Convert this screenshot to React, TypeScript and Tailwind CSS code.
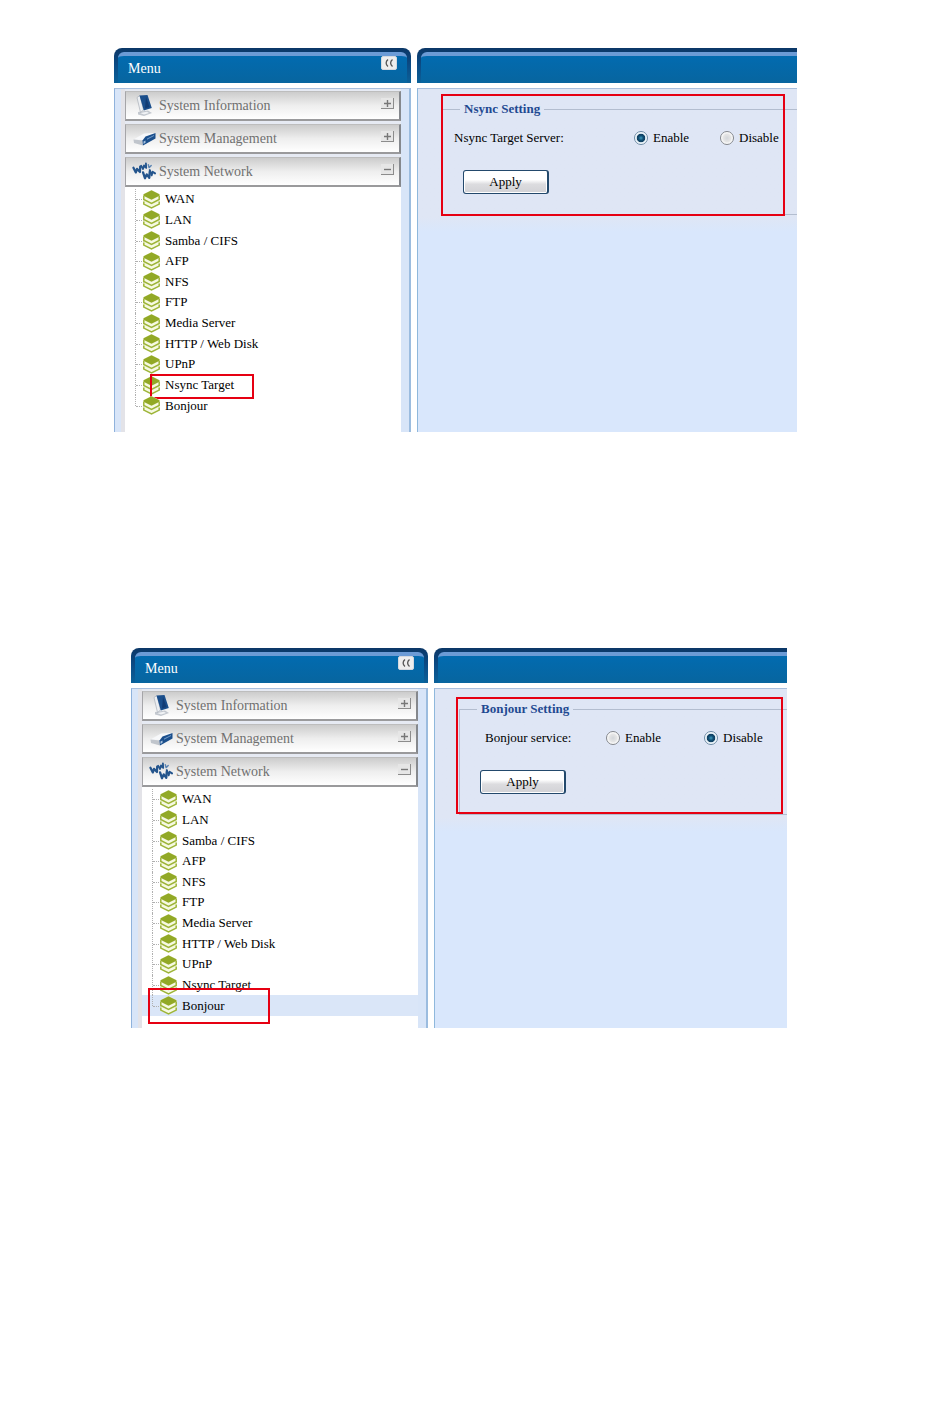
import React from "react";

const services = [
  "WAN",
  "LAN",
  "Samba / CIFS",
  "AFP",
  "NFS",
  "FTP",
  "Media Server",
  "HTTP / Web Disk",
  "UPnP",
  "Nsync Target",
  "Bonjour",
];

function StackIcon() {
  return (
    <svg className="relative h-[19px] w-[17px] shrink-0" viewBox="0 0 17 19" aria-hidden="true">
      <path d="M8.500 0 16.500 4v10.300L8.500 18.500.5 14.300V4Z" fill="#f6f9e2" />
      <path d="M8.500.2 16.500 4.200v1.600L8.500 9.800.5 5.800V4.200Z" fill="#92a926" />
      <path
        d="M.8 5.800v3.700L8.500 13.300 16.200 9.500V5.800M.8 11.500v2.600L8.500 18 16.200 14.100v-2.600"
        fill="none"
        stroke="#9db437"
        strokeWidth="1.500"
      />
    </svg>
  );
}

function MonitorIcon() {
  return (
    <svg className="h-[26px] w-[24px]" viewBox="0 0 24 26" aria-hidden="true">
      <path d="M6 20 16 18.500l4 2.500-8 3-6-1.500Z" fill="#c3c8cf" />
      <path d="M8 21 15 19.800l2 1.200-5 1.600Z" fill="#f0f2f5" />
      <path d="M5 5.500 8 3.500 11.500 18 8.500 20.500Z" fill="#eceff3" stroke="#a9afb8" strokeWidth=".7" />
      <path d="M7.500 3.500 15.500 3 19.800 16 11.800 18.500Z" fill="#1b4f8c" />
      <path d="M14 5 17.500 15 13 16.500Z" fill="#123c74" />
    </svg>
  );
}

function DriveIcon() {
  return (
    <svg className="h-[26px] w-[24px]" viewBox="0 0 24 26" aria-hidden="true">
      <path d="M1.500 14.500 12 8.500 23.500 8 13 15Z" fill="#f7f8fa" />
      <path d="M1.500 14.500 11 15.500v5L2 18Z" fill="#c0c5cc" />
      <path d="M10.500 15.500 13.500 11.500 23.500 8v5.500L11 20.500Z" fill="#1b4f8c" />
      <path d="M15 13.500 22 10v1L15 14.800Z" fill="#6d97c6" />
      <path d="M11.500 16.500 13.500 15.400v2.400L11.500 19Z" fill="#a9c3e0" />
    </svg>
  );
}

function WebIcon() {
  return (
    <svg
      className="h-[26px] w-[25px]"
      viewBox="0 0 25 26"
      fill="none"
      stroke="#24558d"
      strokeLinejoin="round"
      strokeLinecap="round"
      aria-hidden="true"
    >
      <path d="M1.500 9.500 4 14.500 5.200 10.800 8.300 14 8.500 8.300" strokeWidth="2.300" />
      <path d="M9.500 7.500 11.500 11 12.500 7.200 14.800 9.800 14.500 5" strokeWidth="1.900" />
      <path d="M11.500 14.500 13.500 20.500 15.300 16.500 18 20 18.500 13.500" strokeWidth="2.400" />
      <path d="M18.500 12 20.500 17.500 21.500 13.800 24 15.500" strokeWidth="2" />
      <path d="M17 6.500 17.800 9.500 20 7.200" stroke="#5c85b3" strokeWidth="1.500" />
    </svg>
  );
}

const groups = [
  { title: "System Information", icon: <MonitorIcon />, open: false },
  { title: "System Management", icon: <DriveIcon />, open: false },
  { title: "System Network", icon: <WebIcon />, open: true },
];

function TitleBar({ children, open }: { children?: React.ReactNode; open?: boolean }) {
  return (
    <div
      className={
        "flex h-[35px] bg-linear-to-b from-[#0b3767] via-[#0b4c86] to-[#0b6199] pt-1 pl-1 " +
        (open ? "rounded-tl-lg" : "rounded-t-lg pr-1")
      }
    >
      <div
        className={
          "flex flex-1 justify-between border-t-4 border-[#6b9bd6] bg-linear-to-b from-[#026bb0] to-[#07659f] " +
          (open ? "rounded-tl-md" : "rounded-t-md")
        }
      >
        {children}
      </div>
    </div>
  );
}

function Menu({ callout, selected }: { callout: React.ReactNode; selected?: boolean }) {
  return (
    <nav aria-label="Menu" className="flex w-[297px] shrink-0 flex-col gap-[5px]">
      <TitleBar>
        <h2 className="pt-1 pl-[10px] text-[14px] leading-[17px] text-white">Menu</h2>
        <button
          type="button"
          aria-label="Collapse menu"
          className="mr-[10px] flex h-[14px] w-[16px] items-center justify-center rounded-xs border border-[#d5d9df] bg-[#eeeeee]"
        >
          <svg className="h-[10px] w-[12px] shrink-0" viewBox="0 0 12 10" fill="none" stroke="#555" strokeWidth="1.300" aria-hidden="true">
            <path d="M5 1.500C2.500 3.500 2.500 6.500 5 8.500M9.500 1.500C7 3.500 7 6.500 9.500 8.500" />
          </svg>
        </button>
      </TitleBar>
      <div className="flex flex-1 border-t border-r-2 border-l border-t-[#a9bfdd] border-r-[#9bbcdf] border-l-[#8fb2dc] bg-[#d8e5f8] pr-2 pl-[6px]">
        <div className="flex-1 border-l-4 border-[#e3e3e8] bg-white">
          <div className="flex flex-col gap-[3px] bg-[#e6eaf3] pt-[2px]">
            {groups.map((g) => (
              <button
                type="button"
                key={g.title}
                aria-expanded={g.open}
                className="flex h-[30px] items-start border-t border-r-2 border-b-2 border-l border-t-[#bdbdbd] border-r-[#85888d] border-b-[#9a9a9c] border-l-[#a5a5a8] bg-linear-to-b from-[#cccccc] via-[#eeeeee] to-white pl-[6px] text-left"
              >
                <span className="flex w-[24px]">{g.icon}</span>
                <span className="flex-1 pt-[5px] pl-[3px] text-[14px] leading-[18px] text-[#707070]">{g.title}</span>
                <span className="mt-[6px] mr-[5px] flex h-[11px] w-[13px] items-center justify-center border-r border-b border-[#8c8c8c] bg-[#e6e6e6]">
                  <svg className="h-[9px] w-[9px]" viewBox="0 0 9 9" stroke="#777" strokeWidth="1.400" aria-hidden="true">
                    <path d={g.open ? "M1 4.500h7" : "M1 4.500h7M4.500 1v7"} />
                  </svg>
                </span>
              </button>
            ))}
          </div>
          <ul className="grid h-[229px] auto-rows-fr pt-[2px]">
            {services.map((name, i) => {
              const last = i === services.length - 1;
              const marked = selected ? last : name === "Nsync Target";
              return (
                <li key={name} className={"relative flex items-center pl-[10px] " + (selected && last ? "bg-[#dae6f8]" : "")}>
                  <span
                    className={
                      "w-[8px] border-l border-dotted border-[#b0b0b0] " + (last ? "h-1/2 self-start" : "self-stretch")
                    }
                  />
                  <span className="absolute top-1/2 left-[11px] w-2 border-t border-dotted border-[#b0b0b0]" />
                  <StackIcon />
                  <a href="#" className="pl-[5px] text-[13px] leading-4 text-black">
                    {name}
                  </a>
                  {marked && callout}
                </li>
              );
            })}
          </ul>
        </div>
      </div>
    </nav>
  );
}

function Choice({ name, label, checked }: { name: string; label: string; checked?: boolean }) {
  return (
    <label className="flex items-center gap-[5px] text-[13px] leading-4 whitespace-nowrap">
      <input
        type="radio"
        name={name}
        defaultChecked={checked}
        className="h-[14px] w-[14px] shrink-0 appearance-none rounded-full border border-[#84878c] bg-[radial-gradient(circle_at_50%_50%,#d3d6da_0,#e6e6e6_45%,#ffffff_70%)] checked:border-[#6c8ba5] checked:bg-[radial-gradient(circle_at_50%_50%,#3f9cbd_0,#0f4d73_28%,#133f60_46%,#dcebf4_54%,#ffffff_70%)]"
      />
      {label}
    </label>
  );
}

function Apply() {
  return (
    <button
      type="button"
      className="h-[24px] w-[86px] rounded-[3px] border border-r-2 border-[#23496c] bg-linear-to-b from-white from-40% via-[#dcdcdf] via-60% to-[#d2d2d6] text-[13px] leading-4 shadow-[inset_0_0_0_1px_#ffffff]"
    >
      Apply
    </button>
  );
}

function Panel({ title, callout, children }: { title: string; callout: React.ReactNode; children: React.ReactNode }) {
  return (
    <div className="flex min-w-0 flex-1 flex-col gap-[5px]">
      <TitleBar open />
      <div className="relative flex-1 border-t border-l border-t-[#a9bfdd] border-l-[#8fb8dc] bg-[#d9e7fc]">
        <div className="bg-linear-to-b from-[#dfe6f5] from-90% to-[#d9e7fc] pt-3 pb-4 pl-6">
          <fieldset className="h-[114px] border border-r-0 border-[#b3bdcf]">
            <legend className="ml-[17px] px-1 text-[13px] leading-4 font-bold text-[#1f4a92]">{title}</legend>
            {children}
          </fieldset>
        </div>
        {callout}
      </div>
    </div>
  );
}

export default function App() {
  return (
    <main className="min-h-screen bg-white pt-12 font-['Liberation_Serif',serif] text-black">
      <section className="mr-[153px] mb-[216px] ml-[114px] flex min-h-[384px] gap-[6px]">
        <Menu
          callout={<span className="pointer-events-none absolute -top-px left-[25px] h-[25px] w-[104px] border-2 border-[#e60012]" />}
        />
        <Panel
          title="Nsync Setting"
          callout={<span className="pointer-events-none absolute top-[5px] right-3 left-[23px] h-[122px] border-2 border-[#e60012]" />}
        >
          <div className="flex pt-[13px] pl-[11px]">
            <span className="w-[180px] text-[13px] leading-4">Nsync Target Server:</span>
            <div className="w-[86px]">
              <Choice name="nsync" label="Enable" checked />
            </div>
            <Choice name="nsync" label="Disable" />
          </div>
          <div className="pt-[23px] pl-5">
            <Apply />
          </div>
        </Panel>
      </section>
      <section className="mr-[163px] ml-[131px] flex min-h-[380px] gap-[6px]">
        <Menu
          selected
          callout={<span className="pointer-events-none absolute -top-[7px] left-[6px] h-[36px] w-[122px] border-2 border-[#e60012]" />}
        />
        <Panel
          title="Bonjour Setting"
          callout={<span className="pointer-events-none absolute top-2 right-1 left-[21px] h-[117px] border-2 border-[#e60012]" />}
        >
          <div className="flex pt-[13px] pl-[25px]">
            <span className="w-[121px] text-[13px] leading-4">Bonjour service:</span>
            <div className="w-[98px]">
              <Choice name="bonjour" label="Enable" />
            </div>
            <Choice name="bonjour" label="Disable" checked />
          </div>
          <div className="pt-[23px] pl-5">
            <Apply />
          </div>
        </Panel>
      </section>
    </main>
  );
}
